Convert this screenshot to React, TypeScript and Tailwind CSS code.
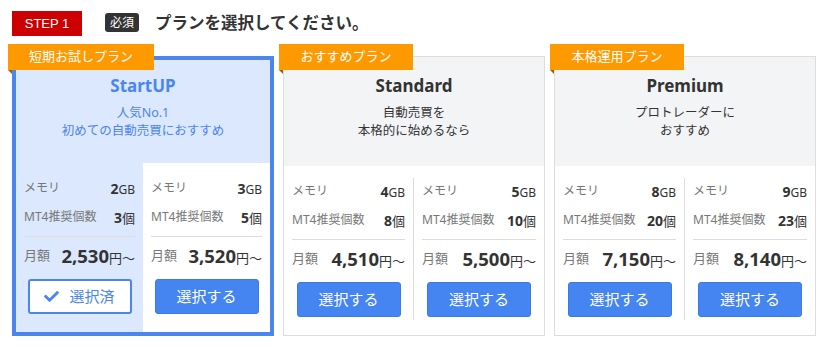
import { FaCheck } from "react-icons/fa";

type Tier = {
  memory: number;
  mt4: number;
  price: string;
  selected?: boolean;
};

type Plan = {
  name: string;
  tag: string;
  tagWidth: string;
  lines: string[];
  active?: boolean;
  tiers: [Tier, Tier];
};

const PLANS: Plan[] = [
  {
    name: "StartUP",
    tag: "短期お試しプラン",
    tagWidth: "w-[146px]",
    lines: ["人気No.1", "初めての自動売買におすすめ"],
    active: true,
    tiers: [
      { memory: 2, mt4: 3, price: "2,530", selected: true },
      { memory: 3, mt4: 5, price: "3,520" },
    ],
  },
  {
    name: "Standard",
    tag: "おすすめプラン",
    tagWidth: "w-[134px]",
    lines: ["自動売買を", "本格的に始めるなら"],
    tiers: [
      { memory: 4, mt4: 8, price: "4,510" },
      { memory: 5, mt4: 10, price: "5,500" },
    ],
  },
  {
    name: "Premium",
    tag: "本格運用プラン",
    tagWidth: "w-[134px]",
    lines: ["プロトレーダーに", "おすすめ"],
    tiers: [
      { memory: 8, mt4: 20, price: "7,150" },
      { memory: 9, mt4: 23, price: "8,140" },
    ],
  },
];

function TierColumn({ tier, first, active }: { tier: Tier; first: boolean; active?: boolean }) {
  return (
    <div className={`flex-1 pt-[12px] pb-[15px] ${tier.selected ? "bg-[#dbe8fd]" : ""}`}>
      <div
        className={`flex flex-col px-[8px] pt-[3px] pb-[3px] ${
          first && !active ? "border-r border-[#dddddd]" : ""
        }`}
      >
        <div className="flex h-[20px] items-center justify-between">
          <span className="text-[12px] text-[#777777]">メモリ</span>
          <span className="text-[#333333]">
            <b className="text-[14px]">{tier.memory}</b>
            <span className="text-[12px]">GB</span>
          </span>
        </div>
        <div className="mt-[9px] flex h-[20px] items-center justify-between">
          <span className="text-[12px] text-[#777777]">MT4推奨個数</span>
          <span className="text-[#333333]">
            <b className="text-[14px]">{tier.mt4}</b>
            <span className="text-[13px]">個</span>
          </span>
        </div>
        <div className="mt-[9px] h-px bg-[#dddddd]" />
        <div className="mt-[7px] flex h-[24px] items-center justify-between">
          <span className="text-[13px] text-[#777777]">月額</span>
          <span className="text-[#333333]">
            <b className="text-[18.5px]">{tier.price}</b>
            <span className="text-[13px]">円～</span>
          </span>
        </div>
        {tier.selected ? (
          <button className="mx-auto mt-[11px] flex h-[35px] w-[104px] items-center justify-center gap-[10px] rounded-[3px] border-2 border-[#4a86ee] bg-white text-[15px] text-[#4a86ee]">
            <FaCheck size={15} />
            <span>選択済</span>
          </button>
        ) : (
          <button className="mx-auto mt-[11px] flex h-[35px] w-[104px] items-center justify-center rounded-[3px] border border-[#3c79e4] bg-[#4485f2] text-[15px] text-white">
            選択する
          </button>
        )}
      </div>
    </div>
  );
}

function PlanCard({ plan }: { plan: Plan }) {
  return (
    <div className="relative w-[262px] pt-[12px]">
      <div
        className={`absolute left-[-4px] top-0 z-10 flex h-[26px] items-center justify-center bg-[#ff9900] text-[13px] text-white ${plan.tagWidth}`}
      >
        {plan.tag}
        <span className="absolute left-0 top-full h-0 w-0 border-l-[4px] border-t-[4px] border-l-transparent border-t-[#a35f00]" />
      </div>
      <div
        className={`flex h-[280px] flex-col bg-white ${
          plan.active ? "border-4 border-[#4a86ee]" : "border border-[#dddddd]"
        }`}
      >
        <div
          className={`flex flex-col items-center ${
            plan.active ? "h-[106px] bg-[#dbe8fd] pt-[14px] text-[#4a86ee]" : "h-[109px] bg-[#f3f4f6] pt-[17px] text-[#333333]"
          }`}
        >
          <div className="h-[24px] text-[17px] font-bold leading-[24px]">{plan.name}</div>
          <div className="mt-[6px] text-center text-[12.5px] leading-[18px]">
            {plan.lines.map((l) => (
              <div key={l}>{l}</div>
            ))}
          </div>
        </div>
        <div className="flex flex-1">
          <TierColumn tier={plan.tiers[0]} first active={plan.active} />
          <TierColumn tier={plan.tiers[1]} first={false} active={plan.active} />
        </div>
      </div>
    </div>
  );
}

export default function App() {
  return (
    <div className="h-[347px] w-[826px] overflow-hidden bg-white font-['Noto_Sans','Noto_Sans_CJK_JP',sans-serif] text-[#333333]">
      <div className="flex h-[44px] items-start pl-[12px] pt-[11px]">
        <div className="flex h-[25px] w-[70px] items-center justify-center bg-[#cc0000] font-['Liberation_Sans',sans-serif] text-[13px] text-white">
          STEP 1
        </div>
        <div className="ml-[23px] mt-[2px] flex h-[19px] w-[34px] items-center justify-center rounded-[3px] bg-[#333333] text-[12px] text-white">
          必須
        </div>
        <div className="ml-[16px] text-[16.5px] font-bold leading-[24px]">プランを選択してください。</div>
      </div>
      <div className="flex gap-[9px] pl-[12px]">
        {PLANS.map((p) => (
          <PlanCard key={p.name} plan={p} />
        ))}
      </div>
    </div>
  );
}
